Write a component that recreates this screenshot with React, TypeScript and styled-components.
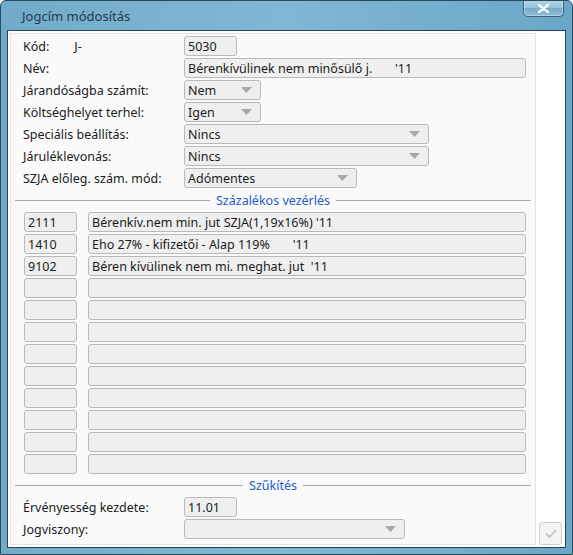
import React from "react";
import styled, { createGlobalStyle } from "styled-components";

const GlobalStyle = createGlobalStyle`
  html, body {
    margin: 0;
    padding: 0;
    background: #ffffff;
  }
  body {
    font-family: "Noto Sans", "Open Sans", "DejaVu Sans", sans-serif;
  }
`;

interface PercentRow {
  code: string;
  text: string;
}

const percentRows: PercentRow[] = [
  { code: "2111", text: "Bérenkív.nem min. jut SZJA(1,19x16%) '11" },
  { code: "1410", text: "Eho 27% - kifizetői - Alap 119%\u00a0\u00a0\u00a0\u00a0\u00a0\u00a0 '11" },
  { code: "9102", text: "Béren kívülinek nem mi. meghat. jut\u00a0 '11" },
  ...Array.from({ length: 9 }, () => ({ code: "", text: "" })),
];

const Arrow = () => (
  <svg width="11" height="6" viewBox="0 0 11 6">
    <path d="M0 0 L11 0 L5.5 6 Z" fill="#a8a8a8" />
  </svg>
);

const App = (): JSX.Element => {
  return (
    <>
      <GlobalStyle />
      <Window>
        <TitleBar>
          <Title>Jogcím módosítás</Title>
          <CloseButton>
            <svg width="13" height="9" viewBox="0 0 13 9">
              <path d="M2 1 L11 8 M11 1 L2 8" stroke="#f4f9fc" strokeWidth="2.4" strokeLinecap="round" />
            </svg>
          </CloseButton>
        </TitleBar>
        <Client>
          <Panel>
            <FieldRow>
              <Label>
                Kód:<Prefix>J-</Prefix>
              </Label>
              <Field $width={53}>5030</Field>
            </FieldRow>
            <FieldRow>
              <Label>Név:</Label>
              <Field $width={342}>Bérenkívülinek nem minősülő j.&nbsp;&nbsp;&nbsp;&nbsp;&nbsp;&nbsp; '11</Field>
            </FieldRow>
            <FieldRow>
              <Label>Járandóságba számít:</Label>
              <Select $width={77}>
                <span>Nem</span>
                <Arrow />
              </Select>
            </FieldRow>
            <FieldRow>
              <Label>Költséghelyet terhel:</Label>
              <Select $width={77}>
                <span>Igen</span>
                <Arrow />
              </Select>
            </FieldRow>
            <FieldRow>
              <Label>Speciális beállítás:</Label>
              <Select $width={245}>
                <span>Nincs</span>
                <Arrow />
              </Select>
            </FieldRow>
            <FieldRow>
              <Label>Járuléklevonás:</Label>
              <Select $width={245}>
                <span>Nincs</span>
                <Arrow />
              </Select>
            </FieldRow>
            <FieldRow>
              <Label>SZJA előleg. szám. mód:</Label>
              <Select $width={173}>
                <span>Adómentes</span>
                <Arrow />
              </Select>
            </FieldRow>

            <SectionHeader $height={22}>
              <SectionLine />
              <SectionTitle>Százalékos vezérlés</SectionTitle>
              <SectionLine />
            </SectionHeader>

            <PercentList>
              {percentRows.map((row, i) => (
                <PercentLine key={i}>
                  <Field $width={53}>{row.code}</Field>
                  <Field $width={438}>{row.text}</Field>
                </PercentLine>
              ))}
            </PercentList>

            <SectionHeader $height={21}>
              <SectionLine />
              <SectionTitle>Szűkítés</SectionTitle>
              <SectionLine />
            </SectionHeader>

            <FieldRow>
              <Label>Érvényesség kezdete:</Label>
              <Field $width={53}>11.01</Field>
            </FieldRow>
            <FieldRow>
              <Label>Jogviszony:</Label>
              <Select $width={221}>
                <span />
                <Arrow />
              </Select>
            </FieldRow>
          </Panel>
          <SideColumn>
            <OkButton>
              <svg width="12" height="9" viewBox="0 0 12 9">
                <path d="M1 4.5 L4.5 8 L11 1" stroke="#c4c4c4" strokeWidth="1.8" fill="none" />
              </svg>
            </OkButton>
          </SideColumn>
        </Client>
      </Window>
    </>
  );
};

// WINDOW FRAME

const Window = styled.div`
  display: flex;
  flex-direction: column;
  width: 573px;
  height: 555px;
  box-sizing: border-box;
  border: 1px solid #2b4a5c;
  border-radius: 6px 6px 0 0;
  padding: 0 6px 6px 6px;
  background: linear-gradient(90deg, #72abca 0%, #80b7d4 50%, #6aa6c7 100%);
  overflow: hidden;
`;

const TitleBar = styled.div`
  position: relative;
  display: flex;
  align-items: center;
  height: 29px;
  flex-shrink: 0;
`;

const Title = styled.div`
  padding-left: 15px;
  font-size: 13px;
  color: #24394a;
`;

const CloseButton = styled.div`
  position: absolute;
  top: -1px;
  right: 2px;
  display: flex;
  align-items: center;
  justify-content: center;
  width: 41px;
  height: 17px;
  box-sizing: border-box;
  border: 1px solid #3d6478;
  border-top: none;
  border-radius: 0 0 5px 5px;
  background: linear-gradient(180deg, #b3d6e8 0%, #94c1d9 50%, #78abc7 51%, #8dbdd6 100%);
  box-shadow: inset 0 0 0 1px rgba(255, 255, 255, 0.35);
`;

const Client = styled.div`
  display: flex;
  flex: 1;
  border: 1px solid #274455;
  background: #ffffff;
  padding: 2px 0 2px 2px;
`;

const Panel = styled.div`
  display: flex;
  flex-direction: column;
  flex: 1;
  padding: 1px 0 0 12px;
  box-sizing: border-box;
  background: #fafafa;
  border: 1px solid #e3e3e3;
`;

const SideColumn = styled.div`
  display: flex;
  flex-direction: column;
  justify-content: flex-end;
  align-items: center;
  width: 29px;
`;

const OkButton = styled.div`
  display: flex;
  align-items: center;
  justify-content: center;
  width: 23px;
  height: 23px;
  box-sizing: border-box;
  border: 1px solid #cfcfcf;
  border-radius: 3px;
  background: #f4f4f4;
`;

// FORM

const FieldRow = styled.div`
  display: flex;
  align-items: center;
  height: 22px;
`;

const Label = styled.div`
  display: flex;
  width: 161px;
  flex-shrink: 0;
  font-size: 12.5px;
  color: #1b1b1b;
`;

const Prefix = styled.span`
  margin-left: 25px;
`;

const Field = styled.div<{ $width: number }>`
  display: flex;
  align-items: center;
  width: ${(p) => p.$width}px;
  height: 20px;
  box-sizing: border-box;
  padding: 0 3px;
  border: 1px solid #b9b9b9;
  border-radius: 3px;
  background: #efefef;
  font-size: 12.5px;
  color: #1b1b1b;
  white-space: pre;
  overflow: hidden;
`;

const Select = styled(Field)`
  justify-content: space-between;
  padding-right: 8px;
`;

// SECTIONS

const SectionHeader = styled.div<{ $height: number }>`
  display: flex;
  align-items: center;
  gap: 6px;
  height: ${(p) => p.$height}px;
  margin: 0 4px 0 -8px;
`;

const SectionLine = styled.div`
  flex: 1;
  height: 1px;
  background: #a9a9a9;
`;

const SectionTitle = styled.div`
  font-size: 12.5px;
  color: #1f5bd1;
`;

const PercentList = styled.div`
  display: flex;
  flex-direction: column;
  padding-left: 1px;
`;

const PercentLine = styled.div`
  display: flex;
  gap: 11px;
  height: 22px;
  align-items: center;
`;

export default App;
